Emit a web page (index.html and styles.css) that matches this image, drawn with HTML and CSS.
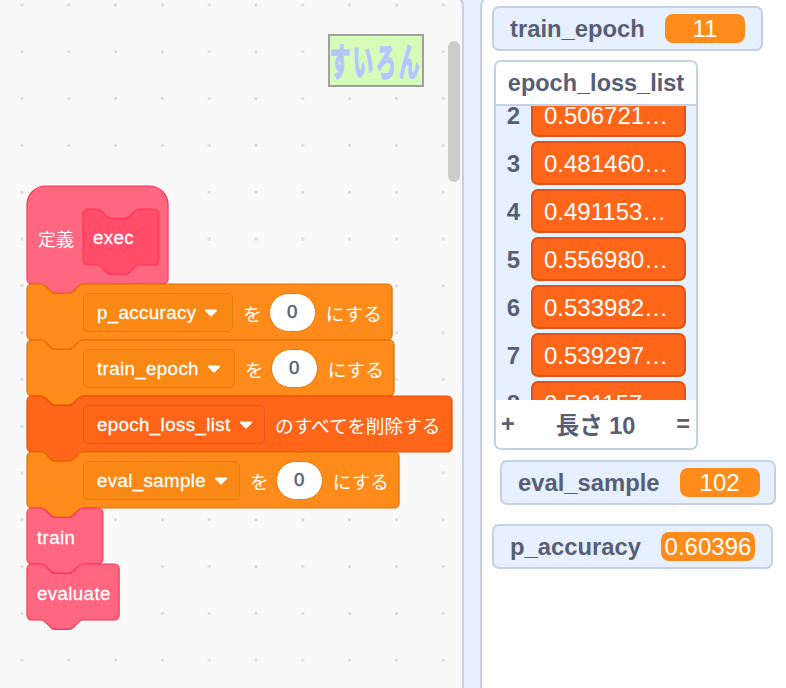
FILE: index.html
```html
<!DOCTYPE html>
<html lang="ja">
<head>
<meta charset="utf-8">
<title>Scratch</title>
<link rel="stylesheet" href="styles.css">
</head>
<body>
<div class="app">
  <main class="workspace">
    <div class="script">
      <div class="block hat">
        <svg class="shape" width="141" height="108"><path class="pink" transform="scale(1.1667)" d="M0 16A16 16 0 0 1 16 0H104.9A16 16 0 0 1 120.9 16V80a4 4 0 0 1-4 4H48c-2 0-3 1-4 2l-4 4c-1 1-2 2-4 2H24c-2 0-3-1-4-2l-4-4c-1-1-2-2-4-2H4a4 4 0 0 1-4-4z"/></svg>
        <span class="label cjk">定義</span>
        <div class="proto">
          <svg class="shape" width="76" height="68"><path class="pink-dark" transform="scale(1.1667)" d="M0 4A4 4 0 0 1 4 0H12c2 0 3 1 4 2l4 4c1 1 2 2 4 2H36c2 0 3-1 4-2l4-4c1-1 2-2 4-2H61a4 4 0 0 1 4 4V44a4 4 0 0 1-4 4H48c-2 0-3 1-4 2l-4 4c-1 1-2 2-4 2H24c-2 0-3-1-4-2l-4-4c-1-1-2-2-4-2H4a4 4 0 0 1-4-4z"/></svg>
          <span class="label">exec</span>
        </div>
      </div>

      <div class="block stmt">
        <svg class="shape" width="365" height="66"><path class="orange" transform="scale(1.1667)" d="M0 4A4 4 0 0 1 4 0H12c2 0 3 1 4 2l4 4c1 1 2 2 4 2H36c2 0 3-1 4-2l4-4c1-1 2-2 4-2H308.9a4 4 0 0 1 4 4V44a4 4 0 0 1-4 4H48c-2 0-3 1-4 2l-4 4c-1 1-2 2-4 2H24c-2 0-3-1-4-2l-4-4c-1-1-2-2-4-2H4a4 4 0 0 1-4-4z"/></svg>
        <div class="drop drop-orange drop-acc"><span class="label">p_accuracy</span><svg class="arrow" width="14" height="8"><path d="M2 1.5h10L7 6.5z"/></svg></div>
        <span class="label cjk">を</span>
        <span class="num num-orange">0</span>
        <span class="label cjk">にする</span>
      </div>

      <div class="block stmt">
        <svg class="shape" width="367" height="66"><path class="orange" transform="scale(1.1667)" d="M0 4A4 4 0 0 1 4 0H12c2 0 3 1 4 2l4 4c1 1 2 2 4 2H36c2 0 3-1 4-2l4-4c1-1 2-2 4-2H310.6a4 4 0 0 1 4 4V44a4 4 0 0 1-4 4H48c-2 0-3 1-4 2l-4 4c-1 1-2 2-4 2H24c-2 0-3-1-4-2l-4-4c-1-1-2-2-4-2H4a4 4 0 0 1-4-4z"/></svg>
        <div class="drop drop-orange drop-epoch"><span class="label">train_epoch</span><svg class="arrow" width="14" height="8"><path d="M2 1.5h10L7 6.5z"/></svg></div>
        <span class="label cjk">を</span>
        <span class="num num-orange">0</span>
        <span class="label cjk">にする</span>
      </div>

      <div class="block stmt">
        <svg class="shape" width="425" height="66"><path class="red" transform="scale(1.1667)" d="M0 4A4 4 0 0 1 4 0H12c2 0 3 1 4 2l4 4c1 1 2 2 4 2H36c2 0 3-1 4-2l4-4c1-1 2-2 4-2H360.3a4 4 0 0 1 4 4V44a4 4 0 0 1-4 4H48c-2 0-3 1-4 2l-4 4c-1 1-2 2-4 2H24c-2 0-3-1-4-2l-4-4c-1-1-2-2-4-2H4a4 4 0 0 1-4-4z"/></svg>
        <div class="drop drop-red drop-list"><span class="label">epoch_loss_list</span><svg class="arrow" width="14" height="8"><path d="M2 1.5h10L7 6.5z"/></svg></div>
        <span class="label cjk">のすべてを削除する</span>
      </div>

      <div class="block stmt">
        <svg class="shape" width="372" height="66"><path class="orange" transform="scale(1.1667)" d="M0 4A4 4 0 0 1 4 0H12c2 0 3 1 4 2l4 4c1 1 2 2 4 2H36c2 0 3-1 4-2l4-4c1-1 2-2 4-2H314.9a4 4 0 0 1 4 4V44a4 4 0 0 1-4 4H48c-2 0-3 1-4 2l-4 4c-1 1-2 2-4 2H24c-2 0-3-1-4-2l-4-4c-1-1-2-2-4-2H4a4 4 0 0 1-4-4z"/></svg>
        <div class="drop drop-orange drop-eval"><span class="label">eval_sample</span><svg class="arrow" width="14" height="8"><path d="M2 1.5h10L7 6.5z"/></svg></div>
        <span class="label cjk">を</span>
        <span class="num num-orange">0</span>
        <span class="label cjk">にする</span>
      </div>

      <div class="block call">
        <svg class="shape" width="76" height="66"><path class="pink" transform="scale(1.1667)" d="M0 4A4 4 0 0 1 4 0H12c2 0 3 1 4 2l4 4c1 1 2 2 4 2H36c2 0 3-1 4-2l4-4c1-1 2-2 4-2H61a4 4 0 0 1 4 4V44a4 4 0 0 1-4 4H48c-2 0-3 1-4 2l-4 4c-1 1-2 2-4 2H24c-2 0-3-1-4-2l-4-4c-1-1-2-2-4-2H4a4 4 0 0 1-4-4z"/></svg>
        <span class="label">train</span>
      </div>

      <div class="block call">
        <svg class="shape" width="92" height="66"><path class="pink" transform="scale(1.1667)" d="M0 4A4 4 0 0 1 4 0H12c2 0 3 1 4 2l4 4c1 1 2 2 4 2H36c2 0 3-1 4-2l4-4c1-1 2-2 4-2H75a4 4 0 0 1 4 4V44a4 4 0 0 1-4 4H48c-2 0-3 1-4 2l-4 4c-1 1-2 2-4 2H24c-2 0-3-1-4-2l-4-4c-1-1-2-2-4-2H4a4 4 0 0 1-4-4z"/></svg>
        <span class="label">evaluate</span>
      </div>
    </div>

    <div class="sprite"><span class="sprite-text">すいろん</span></div>
    <div class="scrollbar"></div>
  </main>

  <div class="gutter"></div>

  <aside class="stage">
    <div class="monitor mon-epoch"><span class="mon-name">train_epoch</span><span class="mon-value">11</span></div>

    <div class="list">
      <div class="list-head">epoch_loss_list</div>
      <div class="list-body">
        <div class="rows">
          <div class="row"><span class="idx">2</span><span class="cell">0.506721…</span></div>
          <div class="row"><span class="idx">3</span><span class="cell">0.481460…</span></div>
          <div class="row"><span class="idx">4</span><span class="cell">0.491153…</span></div>
          <div class="row"><span class="idx">5</span><span class="cell">0.556980…</span></div>
          <div class="row"><span class="idx">6</span><span class="cell">0.533982…</span></div>
          <div class="row"><span class="idx">7</span><span class="cell">0.539297…</span></div>
          <div class="row"><span class="idx">8</span><span class="cell">0.521157…</span></div>
        </div>
      </div>
      <div class="list-foot"><span>+</span><span class="cjk-foot">長さ 10</span><span>=</span></div>
    </div>

    <div class="monitor mon-eval"><span class="mon-name">eval_sample</span><span class="mon-value">102</span></div>
    <div class="monitor mon-acc"><span class="mon-name">p_accuracy</span><span class="mon-value value-tight">0.60396</span></div>
  </aside>
</div>
</body>
</html>
```
FILE: styles.css
```css
* { box-sizing: border-box; }
html, body { margin: 0; padding: 0; }
body { width: 786px; height: 688px; overflow: hidden; background: #fff; font-family: "Liberation Sans", "Noto Sans CJK JP", sans-serif; }

.app { display: flex; width: 786px; height: 688px; background: #e6f0ff; overflow: hidden; }

.workspace {
  position: relative;
  width: 464px;
  height: 700px;
  margin-top: -4px;
  flex: none;
  border: 2px solid #c5d0e0;
  border-left: 0;
  border-radius: 0 10px 0 0;
  overflow: hidden;
  background-color: #f9f9f9;
  background-image: radial-gradient(circle at center, #dddddd 0, #dddddd 1.3px, transparent 1.8px);
  background-size: 46.8px 46.8px;
  background-position: -1.4px -16.4px;
}
.gutter { width: 16px; flex: none; }
.stage {
  position: relative;
  flex: 1;
  height: 700px;
  margin-top: -4px;
  border: 2px solid #c5d0e0;
  border-right: 0;
  border-radius: 10px 0 0 0;
  background: #fff;
}

/* blocks */
.script { position: absolute; left: 27px; top: 188px; display: flex; flex-direction: column; }
.block { position: relative; display: flex; align-items: center; height: 56px; }
.block.hat { height: 98px; width: 141px; padding: 14px 0 9px 11px; gap: 9px; }
.block.stmt { padding-left: 56px; }
.block.call { padding: 3px 0 0 10px; }
.shape { position: absolute; left: 0; top: 0; overflow: visible; }
.shape path { stroke-width: 1; }
.pink { fill: #ff6680; stroke: #ff3355; }
.pink-dark { fill: #ff4d6a; stroke: #ff3355; }
.orange { fill: #ff8c1a; stroke: #db6e00; }
.red { fill: #ff661a; stroke: #e64d00; }

.label { position: relative; color: #fff; font-size: 18.67px; letter-spacing: 0.4px; -webkit-text-stroke: 0.3px #fff; white-space: nowrap; }
.label.cjk { margin-left: 10px; letter-spacing: 0; -webkit-text-stroke: 0; }
.hat .label.cjk { margin-left: 0; font-size: 18px; }
.proto { position: relative; width: 76px; height: 57px; display: flex; align-items: center; padding-left: 10px; }

.drop { position: relative; height: 39px; border-radius: 5px; display: flex; align-items: center; gap: 8px; padding: 2px 0 0 13px; }
.drop-orange { background: #fa8814; border: 1px solid #e57d12; }
.drop-red { background: #fc6418; border: 1px solid #e8581a; }
.drop-acc { width: 150px; }
.drop-epoch { width: 152px; }
.drop-list { width: 182px; }
.drop-eval { width: 157px; }
.arrow { flex: none; overflow: visible; }
.arrow path { fill: #fff; stroke: #fff; stroke-width: 2; stroke-linejoin: round; }

.num { position: relative; width: 47px; height: 39px; margin-left: 7px; border-radius: 20px; background: #fff; color: #575e75; font-size: 18.67px; -webkit-text-stroke: 0.5px #575e75; display: flex; align-items: center; justify-content: center; }
.num-orange { border: 1px solid #e07a10; }

/* backdrop sprite */
.sprite { position: absolute; left: 328px; top: 36px; width: 96px; height: 53px; background: #d5fdb8; border: 2px solid #a0a0a0; display: flex; align-items: center; justify-content: center; overflow: hidden; }
.sprite-text { color: #b4c8ff; font-family: "Noto Sans CJK JP", sans-serif; font-size: 20px; letter-spacing: 3px; -webkit-text-stroke: 2px #b4c8ff; white-space: nowrap; transform: scaleY(1.85); }

.scrollbar { position: absolute; left: 448px; top: 43px; width: 12px; height: 141px; border-radius: 6px; background: #cccccc; }

/* monitors */
.monitor { position: absolute; height: 45px; background: #e6f0ff; border: 2px solid #c5d0e0; border-radius: 7px; display: flex; align-items: center; gap: 20px; padding-left: 16px; }
.mon-name { color: #575e75; font-size: 23.8px; font-weight: 700; white-space: nowrap; }
.mon-value { height: 29px; width: 80px; border-radius: 8px; background: #ff8c1a; color: #fff; font-size: 24px; display: flex; align-items: center; justify-content: center; }
.value-tight { width: 94px; }
.mon-epoch { left: 10px; top: 8px; width: 271px; }
.mon-eval { left: 18px; top: 462px; width: 276px; }
.mon-acc { left: 10px; top: 526px; width: 281px; }

.list { position: absolute; left: 12px; top: 62px; width: 204px; height: 390px; border: 2px solid #c5d0e0; border-radius: 7px; background: #e6f0ff; overflow: hidden; display: flex; flex-direction: column; }
.list-head { height: 44px; flex: none; background: #fff; border-bottom: 2px solid #c5d0e0; color: #575e75; font-size: 23.5px; font-weight: 700; display: flex; align-items: center; justify-content: center; }
.list-body { flex: 1; overflow: hidden; }
.rows { margin-top: -15px; display: flex; flex-direction: column; }
.row { height: 48px; flex: none; display: flex; align-items: center; padding-left: 5px; gap: 5px; }
.idx { width: 25px; padding-top: 2px; color: #575e75; font-size: 24px; font-weight: 700; text-align: center; flex: none; }
.cell { width: 155px; height: 44px; flex: none; background: #ff661a; border: 2px solid #d9561a; border-radius: 7px; color: #fff; font-size: 24px; padding: 2px 0 0 11px; display: flex; align-items: center; white-space: nowrap; overflow: hidden; }
.list-foot { height: 48px; flex: none; background: #fff; color: #575e75; font-weight: 700; font-size: 23.5px; display: flex; align-items: center; justify-content: space-between; padding: 0 6px 0 5px; }
.cjk-foot { font-size: 23.5px; }
```
